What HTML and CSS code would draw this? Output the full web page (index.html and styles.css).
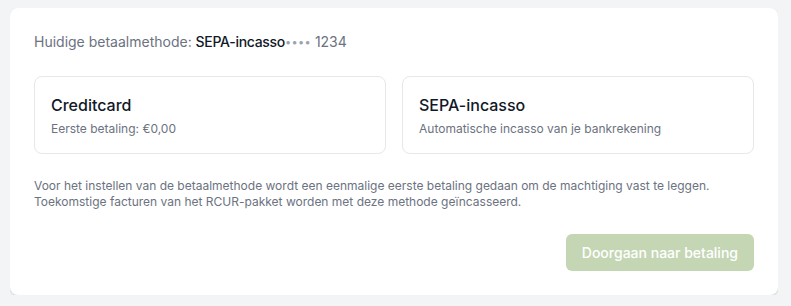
FILE: index.html
```html
<!DOCTYPE html>
<html lang="nl">
<head>
  <meta charset="UTF-8" />
  <meta name="viewport" content="width=device-width, initial-scale=1.0"/>
  <title>Betaalmethode</title>
  <link rel="stylesheet" href="styles.css">
</head>
<body>
  <div class="panel">
    <p class="current">
      Huidige betaalmethode: <strong>SEPA-incasso</strong><span class="dots">••••</span> 1234
    </p>

    <div class="methods">
      <div class="method">
        <h3>Creditcard</h3>
        <p>Eerste betaling: €0,00</p>
      </div>
      <div class="method">
        <h3>SEPA-incasso</h3>
        <p>Automatische incasso van je bankrekening</p>
      </div>
    </div>

    <p class="note">
      Voor het instellen van de betaalmethode wordt een eenmalige eerste betaling gedaan om de machtiging vast te leggen.
      Toekomstige facturen van het RCUR-pakket worden met deze methode geïncasseerd.
    </p>

    <div class="actions">
      <button class="btn" disabled>Doorgaan naar betaling</button>
    </div>
  </div>
</body>
</html>
```

FILE: styles.css
```css
body {
  font-family: Inter, "Liberation Sans", sans-serif;
  background-color: #f3f4f6;
  margin: 8px 13px 0 10px;
  color: #111827;
}

.panel {
  background-color: white;
  border-radius: 8px;
  box-shadow: 0 1px 3px rgba(0, 0, 0, 0.1), 0 1px 2px rgba(0, 0, 0, 0.06);
  padding: 24px;
}

.current {
  margin: 0;
  font-size: 14px;
  line-height: 20px;
  height: 20px;
  color: #6b7280;
}

.current strong {
  color: #111827;
  font-weight: 500;
  letter-spacing: -0.3px;
}

.current .dots {
  font-size: 11px;
  line-height: 1;
  letter-spacing: 0.3px;
  vertical-align: 1px;
  color: #9ca3af;
}

.methods {
  display: grid;
  grid-template-columns: 1fr 1fr;
  gap: 16px;
  margin-top: 24px;
}

.method {
  border: 1px solid #e5e7eb;
  border-radius: 8px;
  padding: 16px;
}

.method h3 {
  margin: 0;
  font-size: 16px;
  line-height: 24px;
  font-weight: 500;
  color: #111827;
}

.method p {
  margin: 4px 0 0;
  font-size: 12px;
  line-height: 16px;
  color: #6b7280;
}

.note {
  margin: 24px 0 0;
  font-size: 12px;
  line-height: 16px;
  color: #6b7280;
}

.actions {
  display: flex;
  justify-content: flex-end;
  margin-top: 24px;
}

.btn {
  font-family: inherit;
  font-size: 14px;
  font-weight: 500;
  line-height: 20px;
  color: white;
  background-color: #c5d6b5;
  border: none;
  border-radius: 6px;
  padding: 9px 16px 8px;
}
```
